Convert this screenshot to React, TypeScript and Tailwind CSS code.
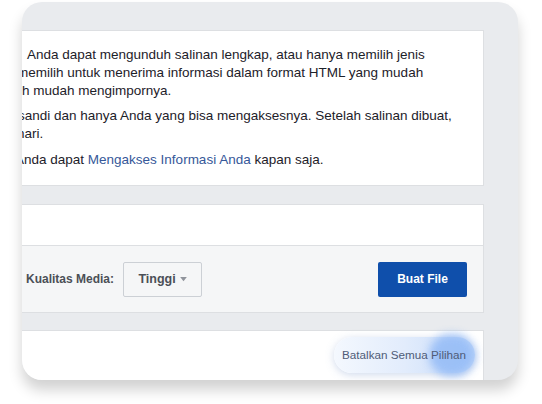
import React from "react";

const lines = [
  { text: "Anda dapat mengunduh salinan lengkap, atau hanya memilih jenis", ml: "ml-[5px]" },
  { text: "memilih untuk menerima informasi dalam format HTML yang mudah", ml: "ml-[-5px]" },
  { text: "lebih mudah mengimpornya.", ml: "ml-[-21px]" },
];

export default function App() {
  return (
    <div className="w-[542px] h-[404px] bg-white overflow-hidden font-['Liberation_Sans',Arial,sans-serif]">
      {/* card */}
      <div className="ml-[22px] mt-[2px] w-[496px] h-[378px] rounded-[20px] bg-[#e9ebee] overflow-hidden shadow-[0_10px_14px_rgba(0,0,0,0.18)] pt-[28px] pr-[34px] flex flex-col">
        {/* info panel */}
        <div className="h-[156px] bg-white border border-l-0 border-[#dddfe2] pt-[15px] text-[13.5px] leading-[18px] text-[#1d2129] overflow-hidden">
          <div>
            {lines.map((l) => (
              <div key={l.text} className={`whitespace-nowrap ${l.ml}`}>
                {l.text}
              </div>
            ))}
          </div>
          <div className="mt-[7px]">
            <div className="whitespace-nowrap ml-[-4px]">
              sandi dan hanya Anda yang bisa mengaksesnya. Setelah salinan dibuat,
            </div>
            <div className="whitespace-nowrap ml-[-5px]">hari.</div>
          </div>
          <div className="mt-[8px] whitespace-nowrap ml-[-7px]">
            Anda dapat <span className="text-[#365899]">Mengakses Informasi Anda</span> kapan saja.
          </div>
        </div>

        {/* options panel */}
        <div className="mt-[18px] bg-white border border-l-0 border-[#dddfe2]">
          <div className="h-[41px] border-b border-[#dddfe2]" />
          <div className="h-[66px] bg-[#f5f6f7] flex items-center pl-[4px] pr-[16px]">
            <span className="text-[12px] font-bold text-[#4b4f56]">Kualitas Media:</span>
            <div className="ml-[9px] w-[79px] h-[35px] border border-[#ccd0d5] bg-[#f5f6f7] rounded-[2px] flex items-center justify-center gap-[4px] text-[12.5px] font-bold text-[#4b4f56]">
              Tinggi
              <svg width="7" height="5" viewBox="0 0 8 6">
                <path d="M0 0h8L4 5z" fill="#90949c" />
              </svg>
            </div>
            <button className="ml-auto w-[89px] h-[35px] rounded-[2px] bg-[#0f4fab] text-white text-[12px] font-bold">
              Buat File
            </button>
          </div>
        </div>

        {/* bottom panel */}
        <div className="mt-[17px] flex-1 bg-white border-t border-r border-[#dddfe2] flex justify-end pt-[6px] pr-[8px]">
          <div className="relative h-[36px] w-[141px] rounded-full bg-gradient-to-r from-[#f4f8fe] via-[#e2ecfc] to-[#c6dbf9] shadow-[0_2px_8px_rgba(120,150,200,0.35)] flex items-center pl-[8px]">
            <div className="absolute right-[0px] top-[-3px] w-[46px] h-[42px] rounded-full bg-[#8fb8f6] opacity-80 blur-[4px]" />
            <span className="relative text-[11.7px] text-[#4f5c78] whitespace-nowrap">Batalkan Semua Pilihan</span>
          </div>
        </div>
      </div>
    </div>
  );
}
